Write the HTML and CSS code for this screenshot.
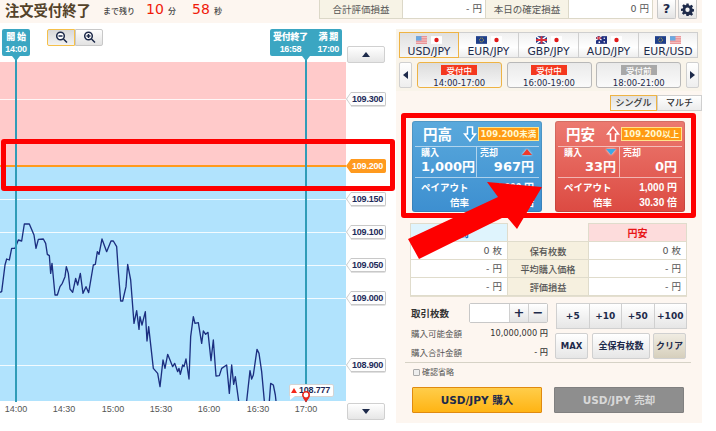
FILE: index.html
```html
<!DOCTYPE html>
<html lang="ja">
<head>
<meta charset="utf-8">
<title>注文受付終了</title>
<link rel="stylesheet" href="styles.css">
</head>
<body>
<div class="page">
  <header class="topbar">
    <h1 class="title">注文受付終了</h1>
    <span class="remain">まで残り</span>
    <span class="count">10</span><span class="unit">分</span>
    <span class="count c2">58</span><span class="unit">秒</span>
    <div class="pl">
      <span class="pl-l">合計評価損益</span><span class="pl-v">- 円</span>
      <span class="pl-l">本日の確定損益</span><span class="pl-v">0 円</span>
    </div>
    <button class="icon-btn help">?</button>
    <button class="icon-btn gear"><svg width="13" height="13" viewBox="0 0 24 24"><path fill="#1d2a4a" fill-rule="evenodd" d="M10 1h4l.6 3.2 2 .9L19.400 3.200l2.800 2.800-1.900 2.800.9 2 3.200.6v4l-3.200.6-.9 2 1.900 2.800-2.800 2.800-2.800-1.900-2 .9L14 24h-4l-.6-3.200-2-.9-2.800 1.900-2.800-2.800 1.900-2.800-.9-2L0 14.600v-4l3.200-.6.900-2L2.200 5.200 5 2.400l2.800 1.900 2-.9zM12 8.500a4 4 0 100 8 4 4 0 000-8z"/></svg></button>
  </header>

  <main class="main">
    <section class="chart">
      <div class="bands"><div class="band-red"></div><div class="band-blue"></div></div>
      <i class="grid" style="top:99px"></i>
      <i class="grid" style="top:199px"></i>
      <i class="grid" style="top:232px"></i>
      <i class="grid" style="top:265px"></i>
      <i class="grid" style="top:298px"></i>
      <i class="grid" style="top:365px"></i>
      <svg class="plot" width="346" height="339" viewBox="0 -459 1038 1017"><polyline class="pl-line" points="0,232 5,230 15,150 20,132 28,135 35,100 45,100 55,75 65,78 73,27 88,27 102,60 108,100 115,73 130,72 137,85 142,118 148,122 152,175 156,145 165,240 172,240 180,215 187,205 195,185 199,155 205,175 210,222 218,232 227,190 233,210 241,175 249,235 258,215 266,233 280,150 286,148 292,110 297,118 306,72 320,110 333,78 340,78 350,95 355,170 362,258 368,258 378,215 383,148 392,195 402,325 410,287 417,343 420,305 426,330 436,290 441,378 446,335 460,460 473,475 480,515 489,435 495,460 503,418 510,435 518,455 524,445 533,470 537,460 541,478 548,450 552,455 558,432 567,492 572,365 580,305 585,325 595,323 605,385 610,348 617,358 624,352 633,437 640,375 648,483 658,482 665,460 680,450 688,535 695,450 701,508 706,485 716,558"/><polyline class="pl-line" points="740,558 750,467 755,492 760,480 771,403 777,415 785,470 793,558"/><polyline class="pl-line" points="808,558 812,505 820,510 826,540 828,558"/></svg>
      <i class="strike"></i>
      <i class="vline v1"></i>
      <i class="vline v2"></i>

      <div class="pin pin-a"><b>開 始</b><b>14:00</b></div>
      <div class="pin pin-b">
        <div><b>受付終了</b><b>16:58</b></div>
        <div><b>満 期</b><b>17:00</b></div>
      </div>
      <div class="zoombar">
        <button class="zb on"><svg width="13" height="13" viewBox="0 0 13 13"><circle cx="5.500" cy="5" r="3.800" fill="#fff" stroke="#1d2a4a" stroke-width="1.500"/><path d="M3.500 5h4M8.500 8l3.500 3.500" stroke="#1d2a4a" stroke-width="1.500" fill="none"/></svg></button>
        <button class="zb"><svg width="13" height="13" viewBox="0 0 13 13"><circle cx="5.500" cy="5" r="3.800" fill="#fff" stroke="#1d2a4a" stroke-width="1.500"/><path d="M3.500 5h4M5.500 3v4M8.500 8l3.500 3.500" stroke="#1d2a4a" stroke-width="1.500" fill="none"/></svg></button>
      </div>

      <button class="scroll up"><i class="tri-up"></i></button>
      <span class="tag" style="top:92px">109.300</span>
      <span class="tag now" style="top:159px">109.200</span>
      <span class="tag" style="top:192px">109.150</span>
      <span class="tag" style="top:225px">109.100</span>
      <span class="tag" style="top:258px">109.050</span>
      <span class="tag" style="top:291px">109.000</span>
      <span class="tag" style="top:358px">108.900</span>
      <button class="scroll down"><i class="tri-down"></i></button>

      <span class="tick" style="left:16px">14:00</span>
      <span class="tick" style="left:64px">14:30</span>
      <span class="tick" style="left:113px">15:00</span>
      <span class="tick" style="left:161px">15:30</span>
      <span class="tick" style="left:209px">16:00</span>
      <span class="tick" style="left:258px">16:30</span>
      <span class="tick" style="left:306px">17:00</span>

      <div class="bubble"><i class="bubble-tri"></i>108.777</div>
      <svg class="marker" width="10" height="13" viewBox="0 0 10 13"><path d="M2 8l3 4.500L8 8z" fill="#e8281e"/><circle cx="5" cy="5" r="3.200" fill="#fff" stroke="#e8281e" stroke-width="1.600"/></svg>
    </section>

    <section class="panel">
      <div class="panel-top">
        <nav class="pairs">
          <button class="pair on">
            <span class="flags"><svg class="flag" viewBox="0 0 10 7"><rect width="10" height="7" fill="#e8868a"/><path d="M0 1.500h10M0 3.500h10M0 5.500h10" stroke="#f5d0d0"/><rect width="5" height="4" fill="#6aa8e0"/></svg><svg class="flag" viewBox="0 0 10 7"><rect width="10" height="7" fill="#fff"/><circle cx="5" cy="3.500" r="2" fill="#e01818"/></svg></span>USD/JPY</button>
          <button class="pair">
            <span class="flags"><svg class="flag" viewBox="0 0 10 7"><rect width="10" height="7" fill="#1f3f8a"/><circle cx="5" cy="3.500" r="1.800" fill="none" stroke="#c9b23a" stroke-width=".8" stroke-dasharray="1 .6"/></svg><svg class="flag" viewBox="0 0 10 7"><rect width="10" height="7" fill="#fff"/><circle cx="5" cy="3.500" r="2" fill="#e01818"/></svg></span>EUR/JPY</button>
          <button class="pair">
            <span class="flags"><svg class="flag" viewBox="0 0 10 7"><rect width="10" height="7" fill="#2a3f8a"/><path d="M0 0l10 7M10 0L0 7" stroke="#fff" stroke-width="1.400"/><path d="M5 0v7M0 3.500h10" stroke="#e0303a" stroke-width="1.600"/></svg><svg class="flag" viewBox="0 0 10 7"><rect width="10" height="7" fill="#fff"/><circle cx="5" cy="3.500" r="2" fill="#e01818"/></svg></span>GBP/JPY</button>
          <button class="pair">
            <span class="flags"><svg class="flag" viewBox="0 0 10 7"><rect width="10" height="7" fill="#1f2f80"/><path d="M0 0l5 3.500M5 0L0 3.500" stroke="#fff"/><path d="M2.500 0v3.500M0 1.700h5" stroke="#e0303a"/><circle cx="7.500" cy="2" r=".7" fill="#fff"/><circle cx="7.500" cy="5.200" r=".7" fill="#fff"/><circle cx="3" cy="5.500" r=".8" fill="#fff"/></svg><svg class="flag" viewBox="0 0 10 7"><rect width="10" height="7" fill="#fff"/><circle cx="5" cy="3.500" r="2" fill="#e01818"/></svg></span>AUD/JPY</button>
          <button class="pair">
            <span class="flags"><svg class="flag" viewBox="0 0 10 7"><rect width="10" height="7" fill="#1f3f8a"/><circle cx="5" cy="3.500" r="1.800" fill="none" stroke="#c9b23a" stroke-width=".8" stroke-dasharray="1 .6"/></svg><svg class="flag" viewBox="0 0 10 7"><rect width="10" height="7" fill="#e8868a"/><path d="M0 1.500h10M0 3.500h10M0 5.500h10" stroke="#f5d0d0"/><rect width="5" height="4" fill="#6aa8e0"/></svg></span>EUR/USD</button>
        </nav>
        <nav class="slots">
          <button class="arrow"><i class="tri-left"></i></button>
          <button class="slot on"><em class="st">受付中</em>14:00-17:00</button>
          <button class="slot"><em class="st">受付中</em>16:00-19:00</button>
          <button class="slot"><em class="st pre">受付前</em>18:00-21:00</button>
          <button class="arrow"><i class="tri-right"></i></button>
        </nav>
      </div>

      <div class="modes"><button class="mode on">シングル</button><button class="mode">マルチ</button></div>

      <div class="cards">
        <article class="card blue">
          <div class="card-head"><span class="card-name">円高</span>
            <svg class="dir" width="14" height="16" viewBox="0 0 14 16"><path d="M4.500 1h5v7h3L7 15 1.500 8h3z" fill="#3f9fe0" stroke="#fff" stroke-width="1.500"/></svg>
            <span class="limit">109.200未満</span></div>
          <div class="card-mid">
            <div class="cell"><span class="k">購入</span><span class="v">1,000円</span></div>
            <div class="cell"><span class="k">売却</span><i class="mini-up"></i><span class="v">967円</span></div>
          </div>
          <dl class="card-foot">
            <dt>ペイアウト</dt><dd>1,000 円</dd>
            <dt class="r">倍率</dt><dd>1.03 倍</dd>
          </dl>
        </article>
        <article class="card red">
          <div class="card-head"><span class="card-name">円安</span>
            <svg class="dir" width="14" height="16" viewBox="0 0 14 16"><path d="M4.500 15h5V8h3L7 1 1.500 8h3z" fill="#e8605a" stroke="#fff" stroke-width="1.500"/></svg>
            <span class="limit">109.200以上</span></div>
          <div class="card-mid">
            <div class="cell"><span class="k">購入</span><i class="mini-down"></i><span class="v">33円</span></div>
            <div class="cell"><span class="k">売却</span><span class="v">0円</span></div>
          </div>
          <dl class="card-foot">
            <dt>ペイアウト</dt><dd>1,000 円</dd>
            <dt class="r">倍率</dt><dd>30.30 倍</dd>
          </dl>
        </article>
      </div>

      <table class="holdings">
        <colgroup><col class="c-side"><col class="c-mid"><col class="c-side2"></colgroup>
        <tr><th class="hb">円高</th><th class="he"></th><th class="hr">円安</th></tr>
        <tr><td>0 枚</td><th>保有枚数</th><td>0 枚</td></tr>
        <tr><td>- 円</td><th>平均購入価格</th><td>- 円</td></tr>
        <tr><td>- 円</td><th>評価損益</th><td>- 円</td></tr>
      </table>

      <div class="trade">
        <div class="trade-left">
          <div class="qty"><span class="qty-l">取引枚数</span><span class="qty-box"><span class="qty-in"></span><button class="pm">+</button><button class="pm">−</button></span></div>
          <div class="money"><span>購入可能金額</span><b>10,000,000 円</b></div>
          <div class="money"><span>購入合計金額</span><b>- 円</b></div>
        </div>
        <div class="trade-right">
          <div class="adds"><button>+5</button><button>+10</button><button>+50</button><button>+100</button></div>
          <div class="acts"><button class="a1">MAX</button><button class="a2">全保有枚数</button><button class="a3">クリア</button></div>
        </div>
      </div>

      <label class="skip"><i class="chk"></i>確認省略</label>
      <div class="orders"><button class="buy">USD/JPY 購入</button><button class="sell">USD/JPY 売却</button></div>
    </section>
  </main>

  <i class="hl hl-a"></i>
  <i class="hl hl-b"></i>
  <svg class="big-arrow" width="716" height="431" viewBox="0 0 716 431"><polygon points="408,239 498,197 487,182 542,187 517,229 506,216 419,259" fill="#fe0000"/></svg>
</div>
</body>
</html>
```
FILE: styles.css
```css
* { box-sizing: border-box; }
html, body { margin: 0; padding: 0; background: #fff; }
body { font-family: "Noto Sans CJK JP", "Liberation Sans", sans-serif; color: #333; overflow: hidden; }
button { font-family: inherit; margin: 0; padding: 0; cursor: pointer; }
i, em { font-style: normal; }
.page { position: relative; width: 716px; height: 431px; overflow: hidden; }

.topbar { width: 702px; height: 23px; background: #fdf6f0; display: flex; align-items: flex-start; padding-left: 5px; }
.title { margin: 0; padding-top: 1px; font-size: 14.300px; line-height: 18px; font-weight: 700; color: #54432a; width: 98px; white-space: nowrap; }
.remain { font-size: 8px; line-height: 21px; color: #444; width: 36px; white-space: nowrap; font-weight: 500; }
.count { font-family: "DejaVu Sans", sans-serif; font-size: 14px; line-height: 18px; color: #f01a0a; margin-left: 7px; width: 22px; }
.count.c2 { margin-left: 16px; width: 22px; }
.unit { font-size: 8px; line-height: 21px; color: #444; width: 8px; font-weight: 500; }
.pl { position: absolute; left: 319px; top: 0; display: flex; height: 19px; border: 1px solid #dcd8c8; border-top: 0; }
.pl-l { width: 83px; background: #f7f3e6; font-size: 9.500px; line-height: 18px; text-align: center; color: #555; border-right: 1px solid #dcd8c8; }
.pl-v { width: 83px; background: #fff; font-size: 9.500px; line-height: 18px; text-align: right; padding-right: 3px; color: #555; border-right: 1px solid #dcd8c8; font-family: "DejaVu Sans", "Noto Sans CJK JP", sans-serif; }
.pl-v:last-child { border-right: 0; }
.icon-btn { position: absolute; top: 0; width: 19px; height: 19px; border: 1px solid #c8c8c8; border-top: 0; border-radius: 0 0 2px 2px; background: linear-gradient(#fff, #e4e4e4); color: #1d2a4a; font: 700 13px/18px "DejaVu Sans", sans-serif; display: flex; align-items: center; justify-content: center; }
.help { left: 657px; }
.gear { left: 678px; }

.main { position: relative; height: 408px; }
.chart { position: absolute; left: 0; top: -23px; width: 396px; height: 431px; }
.bands { position: absolute; left: 0; top: 62px; width: 346px; height: 339px; display: flex; flex-direction: column; }
.band-red { height: 103px; background: #ffcaca; }
.band-blue { flex: 1; background: #b1e3fd; }
.grid { position: absolute; left: 0; width: 346px; height: 1px; background: rgba(255,255,255,.85); }
.plot { position: absolute; left: 0; top: 62px; }
.pl-line { fill: none; stroke: #1c2f80; stroke-width: 4; stroke-linejoin: round; }
.strike { position: absolute; left: 0; top: 165px; width: 346px; height: 2px; background: #ff9a1e; }
.vline { position: absolute; top: 56px; height: 346px; width: 2px; background: #2f9cb8; }
.v1 { left: 15px; }
.v2 { left: 305px; width: 2px; }
.pin { position: absolute; top: 29px; height: 27px; padding-top: 2px; background: #3ba6c2; border-radius: 2px; color: #fff; font: 700 9px/12px "Liberation Sans", "Noto Sans CJK JP", sans-serif; letter-spacing: -.3px; text-align: center; }
.pin b { display: block; white-space: nowrap; }
.pin::after { content: ""; position: absolute; bottom: -5px; border: 4px solid transparent; border-top: 5px solid #3ba6c2; border-bottom: 0; }
.pin-a { left: 2px; width: 28px; }
.pin-a::after { left: 9.500px; }
.pin-b { left: 270px; width: 72px; display: flex; justify-content: space-between; padding: 2px 3px 0; }
.pin-b::after { left: 32px; }
.zoombar { position: absolute; left: 47px; top: 29px; display: flex; }
.zb { width: 28px; height: 17px; border: 1px solid #c8c8c8; background: linear-gradient(#fdfdfd, #e2e2e2); display: flex; align-items: center; justify-content: center; border-radius: 0 2px 2px 0; }
.zb.on { border-color: #f5c04a; background: linear-gradient(#d8d8d8, #f2f2f2); border-radius: 2px 0 0 2px; }
.scroll { position: absolute; left: 347px; width: 38px; height: 17px; border: 1px solid #d0d0d0; border-radius: 2px; background: linear-gradient(#fff, #e6e6e6); display: flex; align-items: center; justify-content: center; }
.up { top: 46px; }
.down { top: 403px; }
.tri-up { border: 4px solid transparent; border-top: 0; border-bottom: 5px solid #1d2a4a; }
.tri-down { border: 4px solid transparent; border-bottom: 0; border-top: 5px solid #1d2a4a; }
.tri-left { border: 4px solid transparent; border-left: 0; border-right: 5px solid #1d2a4a; }
.tri-right { border: 4px solid transparent; border-right: 0; border-left: 5px solid #1d2a4a; }
.tag { position: absolute; left: 351px; width: 35px; height: 14px; background: #fdfdfd; border: 1px solid #c8c8c8; border-left: 0; border-radius: 0 2px 2px 0; font: 700 9px/12px "Liberation Sans", sans-serif; color: #1d2a5a; letter-spacing: -.2px; padding-left: 1px; box-shadow: 0 1px 0 #e0e0e0; }
.tag::before { content: ""; position: absolute; left: -5px; top: -1px; border: 7px solid transparent; border-left: 0; border-right: 5px solid #c8c8c8; }
.tag::after { content: ""; position: absolute; left: -4px; top: 0; border: 6px solid transparent; border-left: 0; border-right: 4px solid #fdfdfd; }
.tag.now { background: #ff9a1e; color: #fff; border-color: #ff9a1e; box-shadow: none; }
.tag.now::before { border-right-color: #ff9a1e; }
.tag.now::after { border-right-color: #ff9a1e; }
.tick { position: absolute; top: 403px; transform: translateX(-50%); font: 9px/12px "Liberation Sans", sans-serif; color: #555; }
.bubble { position: absolute; left: 289px; top: 384px; width: 45px; height: 13px; background: #fff; border: 1px solid #d4d4d4; border-radius: 2px; font: 700 9px/11px "Liberation Sans", sans-serif; color: #1d2a5a; padding-left: 9px; letter-spacing: -.2px; }
.bubble-tri { position: absolute; left: 1px; top: 3px; border: 3.500px solid transparent; border-top: 0; border-bottom: 5px solid #f4281a; }
.bubble::after { content: ""; position: absolute; left: 0; bottom: -4px; border-left: 5px solid #fff; border-bottom: 4px solid transparent; }
.marker { position: absolute; left: 301px; top: 390px; }

.panel { position: absolute; left: 396px; top: 6px; width: 306px; height: 394px; background: #fdf6f0; display: flex; flex-direction: column; }
.panel-top { background: #f9f4ea; height: 62px; padding: 3px; display: flex; flex-direction: column; gap: 4px; }
.pairs { display: flex; }
.pair { width: 60px; height: 26px; border: 1px solid #cfcfcf; border-left: 0; background: linear-gradient(#f0f0f0, #fff 60%, #eee); font: 500 10.800px/12px "DejaVu Sans", sans-serif; color: #1d2a4a; display: flex; flex-direction: column; align-items: center; padding-top: 3px; }
.pair.on { border: 1px solid #eeb344; background: linear-gradient(#e0e0e0, #f6f6f6); width: 60px; }
.pair:last-child { width: 59px; }
.flags { display: flex; gap: 4px; height: 8px; margin-bottom: 2px; }
.flag { width: 11px; height: 8px; display: block; }
.slots { display: flex; justify-content: space-between; }
.arrow { width: 13px; height: 26px; border: 1px solid #d0d0d0; border-radius: 2px; background: linear-gradient(#fff, #eee); display: flex; align-items: center; justify-content: center; }
.slot { width: 85px; height: 26px; border: 1px solid #b8b8b8; border-radius: 3px; background: linear-gradient(#eaeaea, #fafafa); font: 500 8.500px/12px "DejaVu Sans", sans-serif; color: #1d2a4a; display: flex; flex-direction: column; align-items: center; padding-top: 2px; }
.slot.on { border-color: #eeb344; background: linear-gradient(#dcdcdc, #f6f6f6); }
.st { width: 36px; height: 10px; background: #f4381e; color: #fff; font: 500 8.500px/10px "Noto Sans CJK JP", sans-serif; margin-bottom: 2px; text-align: center; }
.st.pre { background: #a8a8a8; }
.modes { display: flex; justify-content: flex-end; margin-top: 4px; }
.mode { width: 45px; height: 16px; border: 1px solid #cfcfcf; background: linear-gradient(#fff, #ececec); font: 500 9px/14px "Noto Sans CJK JP", sans-serif; color: #333; }
.mode.on { border-color: #eeb344; background: linear-gradient(#e0e0e0, #f6f6f6); width: 47px; }

.cards { display: flex; justify-content: space-between; width: 273px; margin: 10px 0 0 16px; }
.card { width: 130px; height: 91px; border-radius: 3px; color: #fff; box-shadow: inset 0 0 0 1px rgba(0,0,0,.1); }
.blue { background: linear-gradient(#5aa9dc, #3d8fd0); }
.red { background: linear-gradient(#ec7a70, #dc4a42); }
.card-head { height: 26px; display: flex; align-items: center; border-bottom: 1px solid rgba(255,255,255,.55); margin: 0 3px; padding-left: 8px; }
.card-name { font-size: 14.500px; font-weight: 700; line-height: 22px; width: 41px; }
.dir { display: block; flex: none; margin-left: -1px; }
.limit { width: 62px; height: 14px; margin-left: 1px; background: #ff9a12; border: 1px solid #ffe48a; color: #fff8d0; font: 700 8.500px/12px "DejaVu Sans", "Noto Sans CJK JP", sans-serif; text-align: center; white-space: nowrap; }
.card-mid { height: 31px; display: flex; border-bottom: 1px solid rgba(255,255,255,.55); margin: 0 3px; }
.cell { position: relative; flex: 1; display: flex; flex-direction: column; padding: 0 5px 0 3px; }
.cell:first-child { border-right: 1px solid rgba(255,255,255,.55); flex: none; width: 62px; padding: 0 3px 0 6px; }
.k { font-size: 9px; line-height: 12px; font-weight: 700; }
.v { font: 700 13px/16px "DejaVu Sans", "Noto Sans CJK JP", sans-serif; text-align: right; white-space: nowrap; }
.mini-up { position: absolute; right: 7px; top: 2px; border: 5px solid transparent; border-top: 0; border-bottom: 6px solid #f03a2a; filter: drop-shadow(0 0 1px #fff); }
.mini-down { position: absolute; right: 3px; top: 2px; border: 5px solid transparent; border-bottom: 0; border-top: 6px solid #3aa8e8; filter: drop-shadow(0 0 1px #fff); }
.card-foot { margin: 2px 8px 0 9px; display: grid; grid-template-columns: 48px 1fr; font-size: 9.500px; font-weight: 700; line-height: 15px; }
.card-foot dt { white-space: nowrap; }
.card-foot dt.r { text-align: right; }
.card-foot dd { margin: 0; text-align: right; font: 700 10px/15px "Liberation Sans", "Noto Sans CJK JP", sans-serif; white-space: nowrap; }

.holdings { width: 276px; margin: 11px 0 0 14px; border-collapse: collapse; table-layout: fixed; font-size: 10px; box-shadow: 0 1px 0 #e4dfcf; }
.c-side { width: 97px; }
.c-mid { width: 81px; }
.c-side2 { width: 98px; }
.holdings td, .holdings th { height: 18px; padding: 0; border: 1px solid #e0dccc; line-height: 14px; }
.holdings td { background: #fff; text-align: right; padding-right: 5px; font-family: "DejaVu Sans", "Noto Sans CJK JP", sans-serif; color: #555; font-size: 9.500px; }
.holdings th { background: #f6f0df; font-weight: 500; color: #555; font-size: 9.200px; }
.holdings .hb { background: #dff4fd; color: #1a6ec0; font-weight: 700; font-size: 10px; }
.holdings .he { background: transparent; border-top: 0; }
.holdings .hr { background: #fddcdc; color: #e81818; font-weight: 700; font-size: 10px; }

.trade { display: flex; margin: 7px 0 0 15px; height: 58px; width: 276px; justify-content: space-between; }
.trade-left { width: 137px; display: flex; flex-direction: column; }
.qty { display: flex; justify-content: space-between; align-items: center; height: 20px; }
.qty-l { font-size: 9.500px; font-weight: 700; color: #333; }
.qty-box { display: flex; border: 1px solid #c8c8c8; border-radius: 2px; height: 20px; }
.qty-in { width: 39px; background: #fff; }
.pm { width: 19px; border: 0; border-left: 1px solid #d0d0d0; background: linear-gradient(#fff, #e4e4e4); font: 700 13px/16px "DejaVu Sans", sans-serif; color: #1d2a4a; }
.money { display: flex; justify-content: space-between; align-items: center; font-size: 8.500px; color: #555; height: 19px; white-space: nowrap; }
.money b { font: 500 8.200px/12px "DejaVu Sans", "Noto Sans CJK JP", sans-serif; color: #333; }
.trade-right { width: 131px; display: flex; flex-direction: column; gap: 4px; margin-left: 7px; }
.trade-right button { height: 26px; border: 1px solid #d0d0d0; background: linear-gradient(#fff, #e6e6e6); font: 700 9px/14px "DejaVu Sans", "Noto Sans CJK JP", sans-serif; color: #1d2a4a; white-space: nowrap; }
.adds { display: flex; }
.adds button { flex: 1; border-left: 0; }
.adds button:first-child { border-left: 1px solid #d0d0d0; }
.acts { display: flex; gap: 4px; margin-left: -1px; }
.acts .a1 { width: 33px; border-radius: 2px; font-size: 8.500px; }
.acts .a2 { width: 58px; border-radius: 2px; }
.acts .a3 { width: 33px; margin-left: -1px; border-radius: 2px; background: linear-gradient(#f0ece2, #d6cfbc); }
.skip { display: flex; align-items: center; font-size: 8px; color: #555; margin: 0 0 0 17px; padding: 4px 0 0; position: relative; line-height: 14px; }
.skip::before { content: ""; position: absolute; left: -8px; top: 1px; width: 286px; height: 1px; background: #d6d2c6; }
.chk { width: 7px; height: 7px; border: 1px solid #aaa; background: #eee; border-radius: 1px; margin-right: 2px; }
.orders { display: flex; justify-content: space-between; width: 272px; margin: 8px 0 0 16px; }
.orders button { width: 130px; height: 26px; font: 700 10.500px/14px "DejaVu Sans", "Noto Sans CJK JP", sans-serif; border-radius: 1px; }
.buy { background: linear-gradient(#ffcd4a, #ffb414); border: 1px solid #e08a10; color: #1d2a4a; }
.sell { background: #8e8e8e; border: 1px solid #808080; color: #d8d8d8; }

.hl { position: absolute; border: 5px solid #fe0000; border-radius: 3px; }
.hl-a { left: 1px; top: 139px; width: 394px; height: 52px; }
.hl-b { left: 401px; top: 113px; width: 295px; height: 105px; }
.big-arrow { position: absolute; left: 0; top: 0; }
```
